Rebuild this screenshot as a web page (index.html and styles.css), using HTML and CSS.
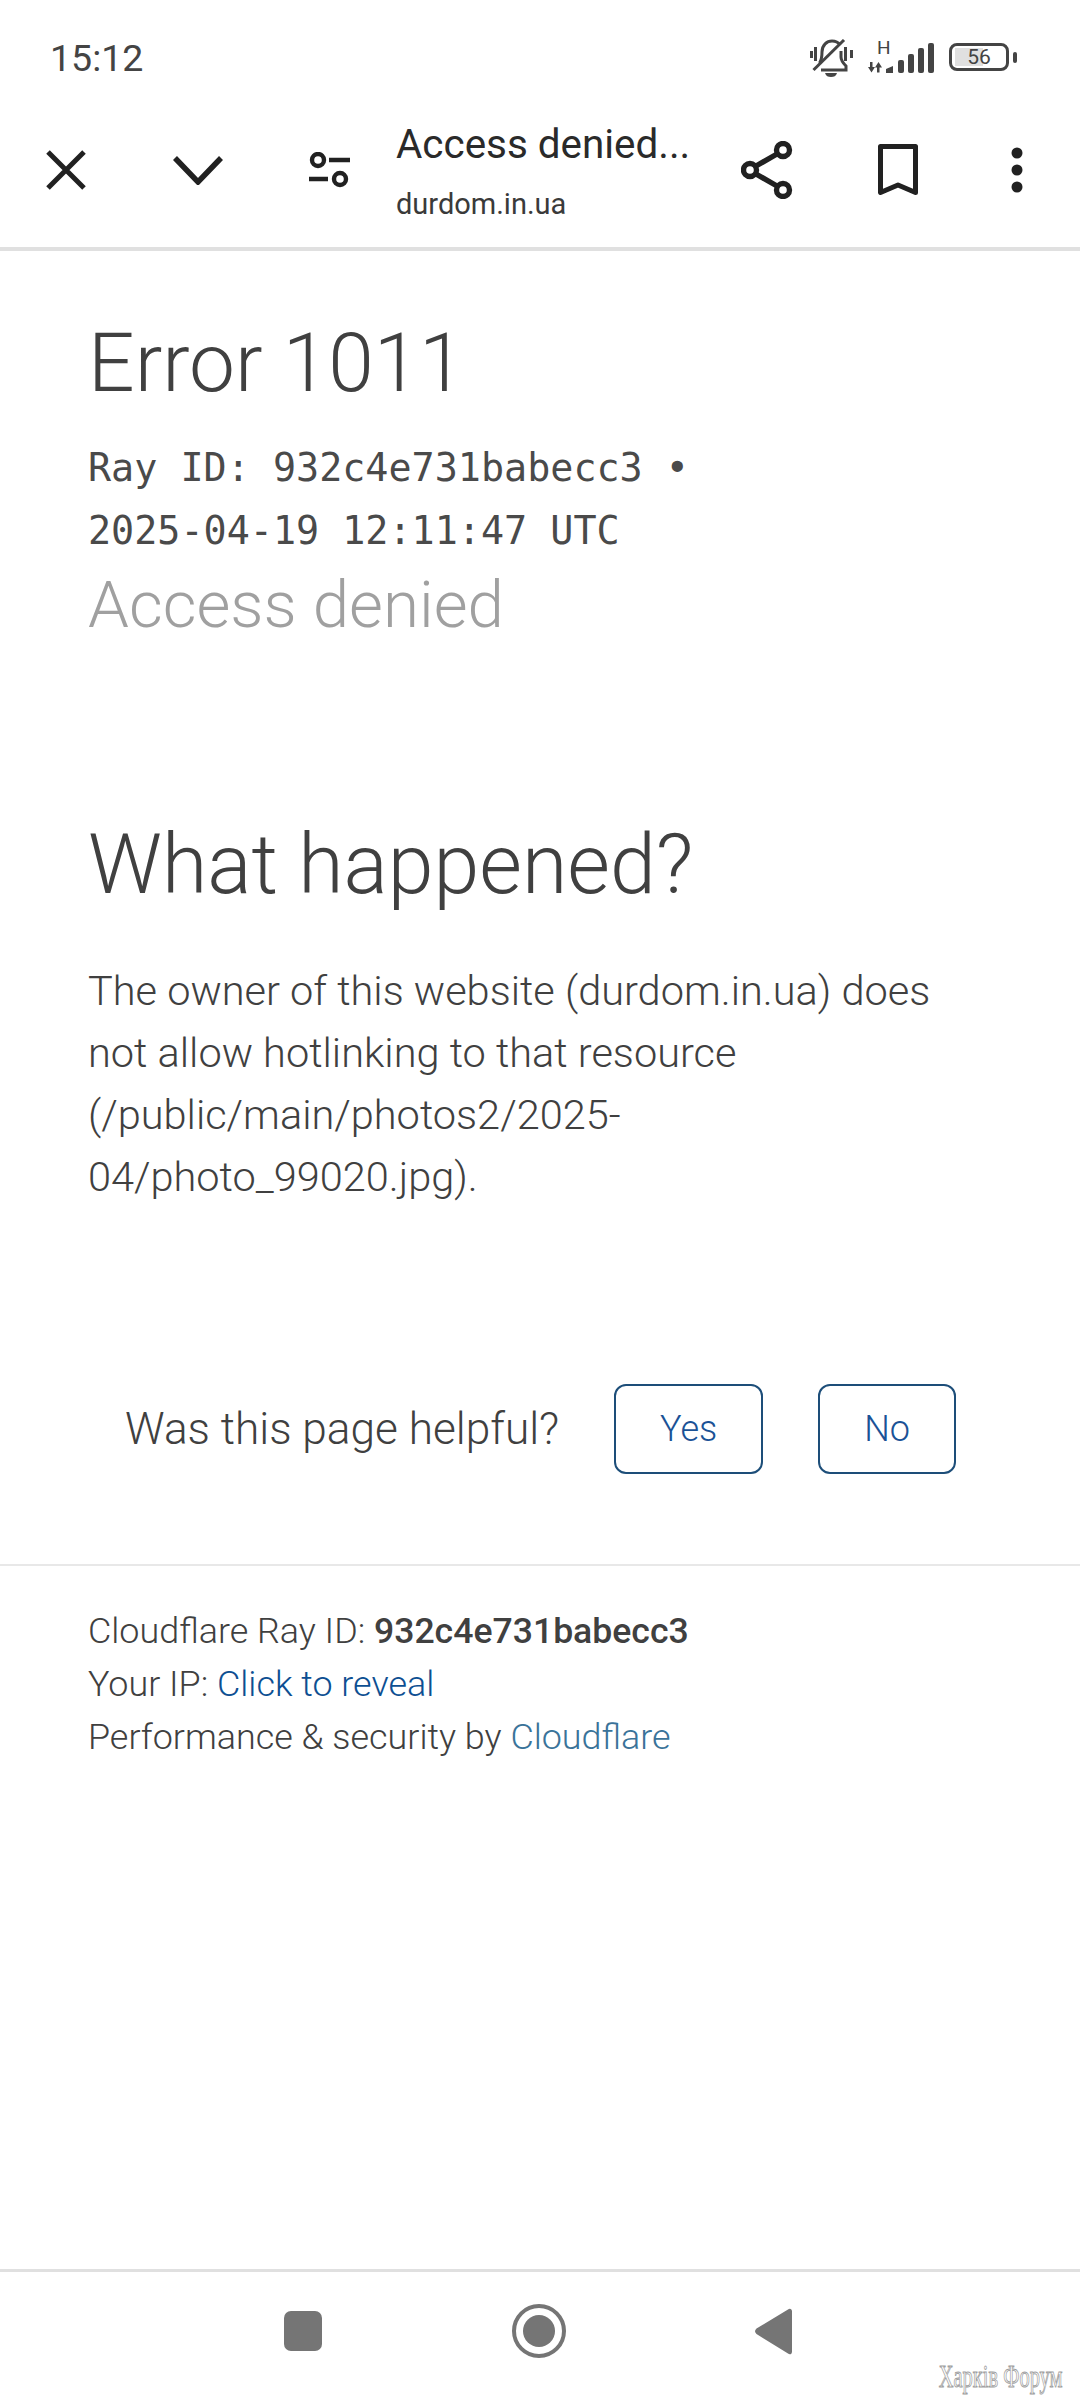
FILE: index.html
```html
<!doctype html>
<html lang="en">

<head>
  <meta charset="utf-8" />
  <title>Access denied</title>
  <link rel="stylesheet" href="styles.css">
</head>

<body>
  <div class="phone">
    <div class="status-bar">
      <span class="time">15:12</span>
      <div class="status-icons">
        <svg class="ic-bell" viewBox="0 0 44 38" width="44" height="38" fill="none" stroke="#444" stroke-width="3">
          <path d="M2.500 12v7M6.500 8v14M36.500 8v14M42.500 11v8" />
          <path d="M10.500 24c2-3 2.500-7 2.500-11 0-7 5-11 10-11 3 0 6 1 8 4M32 12v6c0 4 2 6 5 9v4H12" />
          <path d="M4.500 31 35 1" />
          <path d="M16 34h12c-1 3-3 4-6 4s-5-1-6-4z" fill="#444" stroke="none" />
        </svg>
        <div class="signal">
          <span class="net">H</span>
          <svg viewBox="0 0 66 32" width="66" height="32" fill="#444">
            <path d="M2 21h2.500v5H7l-3.500 5.500L0 26h2zM9 31.500h2.500v-5H14L10.500 21 7 26.500h2z" />
            <path d="M18 28l7-3v7h-7z" />
            <rect x="30" y="19" width="6" height="13" rx="2" />
            <rect x="40" y="13" width="6" height="19" rx="2" />
            <rect x="50" y="7" width="6" height="25" rx="2" />
            <rect x="60" y="2" width="6" height="30" rx="2" />
          </svg>
        </div>
        <div class="battery">
          <div class="battery-body"><span class="battery-fill"></span><span class="battery-num">56</span></div>
          <span class="battery-tip"></span>
        </div>
      </div>
    </div>

    <div class="toolbar">
      <svg class="ic-close" viewBox="0 0 40 40" width="40" height="40" fill="none" stroke="#212121" stroke-width="5">
        <path d="M2 2l36 36M38 2 2 38" />
      </svg>
      <svg class="ic-chevron" viewBox="0 0 50 30" width="50" height="30" fill="none" stroke="#212121" stroke-width="5.500">
        <path d="M2 3l23 24L48 3" />
      </svg>
      <svg class="ic-tune" viewBox="0 0 42 36" width="42" height="36" fill="none" stroke="#212121" stroke-width="4.400">
        <circle cx="10" cy="8" r="6" />
        <circle cx="32" cy="27" r="6" />
        <path d="M21 8h21M1 27h19" />
      </svg>
      <div class="tab-title">
        <span class="tab-name">Access denied...</span>
        <span class="tab-url">durdom.in.ua</span>
      </div>
      <svg class="ic-share" viewBox="0 0 52 58" width="52" height="58" fill="none" stroke="#212121" stroke-width="5.400">
        <circle cx="9" cy="29" r="6.500" />
        <circle cx="42" cy="9" r="6.500" />
        <circle cx="42" cy="49" r="6.500" />
        <path d="M15 25l21-12M15 33l21 12" />
      </svg>
      <svg class="ic-mark" viewBox="0 0 40 52" width="40" height="52" fill="none" stroke="#212121" stroke-width="5">
        <path d="M2.500 2.500h35v46L20 41 2.500 48.500z" stroke-linejoin="round" />
      </svg>
      <svg class="ic-more" viewBox="0 0 12 46" width="12" height="46" fill="#212121">
        <circle cx="6" cy="6" r="5.500" />
        <circle cx="6" cy="23" r="5.500" />
        <circle cx="6" cy="40" r="5.500" />
      </svg>
    </div>

    <div class="page">
      <div class="error-head">
        <h1>Error 1011</h1>
        <div class="ray-line">Ray ID: 932c4e731babecc3 •<br>2025-04-19 12:11:47 UTC</div>
        <h2>Access denied</h2>
      </div>

      <div class="what">
        <h3>What happened?</h3>
        <p>The owner of this website (durdom.in.ua) does not allow hotlinking to that resource (/public/main/photos2/2025-04/photo_99020.jpg).</p>
      </div>

      <div class="feedback">
        <span>Was this page helpful?</span>
        <a class="fb-btn fb-yes">Yes</a>
        <a class="fb-btn fb-no">No</a>
      </div>

      <div class="footer">
        <div>Cloudflare Ray ID: <strong>932c4e731babecc3</strong></div>
        <div>Your IP: <a class="link-ip">Click to reveal</a></div>
        <div>Performance &amp; security by <a class="link-cf">Cloudflare</a></div>
      </div>
    </div>

    <div class="nav-bar">
      <span class="nav-square"></span>
      <span class="nav-home"><span></span></span>
      <svg class="nav-back" viewBox="0 0 37 47" width="37" height="47" fill="#757575">
        <path d="M33 1.500c1.500-1.500 4-1 4 2v40c0 3-2.500 3.500-4 2L1.500 26c-2-2-2-3.500 0-5.500z" />
      </svg>
    </div>

    <div class="watermark">Харків Форум</div>
  </div>
</body>

</html>
```

FILE: styles.css
```css
body {
  margin: 0;
  background: #fff;
  font-family: Roboto, sans-serif;
}

.phone {
  width: 1080px;
  height: 2400px;
  display: flex;
  flex-direction: column;
  position: relative;
  overflow: hidden;
}

.status-bar {
  height: 92px;
  flex: none;
  display: flex;
  align-items: flex-start;
  justify-content: space-between;
  padding: 39px 63px 0 50px;
  box-sizing: border-box;
}

.time {
  font-size: 37.500px;
  line-height: 38px;
  color: #444;
}

.status-icons {
  display: flex;
  align-items: flex-start;
}

.signal {
  position: relative;
  margin: 2px 0 0 15px;
  width: 66px;
  height: 32px;
}

.net {
  position: absolute;
  left: 9px;
  top: -3px;
  font-size: 19px;
  line-height: 19px;
  color: #444;
}

.battery {
  display: flex;
  align-items: center;
  margin: 4px 0 0 15px;
}

.battery-body {
  width: 54px;
  height: 22px;
  border: 3px solid #444;
  border-radius: 8px;
  position: relative;
  display: flex;
  align-items: center;
  justify-content: center;
}

.battery-fill {
  position: absolute;
  left: 3px;
  top: 2px;
  bottom: 2px;
  width: 28px;
  background: #e0e0e0;
}

.battery-num {
  position: relative;
  font-size: 21px;
  color: #444;
}

.battery-tip {
  width: 4px;
  height: 11px;
  margin-left: 4px;
  background: #444;
  border-radius: 2px;
}

.toolbar {
  height: 155px;
  flex: none;
  display: flex;
  align-items: center;
  border-bottom: 4px solid #e0e0e0;
}

.toolbar svg {
  flex: none;
}

.ic-close {
  margin-left: 46px;
}

.ic-chevron {
  margin-left: 87px;
}

.ic-tune {
  margin-left: 85px;
}

.tab-title {
  width: 300px;
  margin-left: 46px;
  padding-top: 5px;
  display: flex;
  flex-direction: column;
}

.tab-name {
  font-size: 40.400px;
  line-height: 54px;
  color: #2a2a2a;
  white-space: nowrap;
}

.tab-url {
  font-size: 29px;
  line-height: 44px;
  margin-top: 10px;
  color: #3a3a3a;
}

.ic-share {
  margin-left: 45px;
}

.ic-mark {
  margin-left: 85px;
}

.ic-more {
  margin-left: 93px;
}

.page {
  flex: 1;
  color: #404040;
  font-weight: 300;
  min-height: 0;
}

.error-head {
  padding: 67px 88px 0;
}

h1 {
  font-size: 82px;
  line-height: 90px;
  font-weight: 300;
  margin: 0;
}

.ray-line {
  font-family: "DejaVu Sans Mono", monospace;
  font-weight: 400;
  font-size: 38.400px;
  line-height: 63px;
  margin-top: 28px;
  color: #4a4a4a;
}

h2 {
  font-size: 65.500px;
  line-height: 80px;
  font-weight: 300;
  margin: 3px 0 0;
  color: #a0a0a0;
}

.what {
  padding: 0 88px;
  margin-top: 172px;
}

h3 {
  font-size: 82.500px;
  line-height: 96px;
  font-weight: 300;
  margin: 0;
}

p {
  font-size: 41.500px;
  line-height: 62px;
  margin: 47px 0 0;
}

.feedback {
  display: flex;
  align-items: center;
  font-size: 44.200px;
  margin-top: 176px;
  padding-left: 125px;
}

.fb-btn {
  display: flex;
  align-items: center;
  justify-content: center;
  height: 86px;
  border: 2px solid #1d4e79;
  border-radius: 12px;
  color: #1a5296;
  font-size: 36px;
}

.fb-yes {
  width: 145px;
  margin-left: 55px;
}

.fb-no {
  width: 134px;
  margin-left: 55px;
}

.footer {
  margin-top: 90px;
  border-top: 2px solid #e8e8e8;
  padding: 39px 88px 0;
  font-size: 35.900px;
  line-height: 53px;
}

.footer strong {
  font-weight: 500;
  font-size: 35.600px;
}

.link-ip {
  color: #0d4f92;
}

.link-cf {
  color: #3a7399;
}

.nav-bar {
  height: 131px;
  flex: none;
  border-top: 3px solid #e0e0e0;
  display: flex;
  align-items: center;
  padding: 0 0 10px 284px;
  box-sizing: border-box;
}

.nav-square {
  width: 38px;
  height: 40px;
  border-radius: 7px;
  background: #757575;
}

.nav-home {
  width: 54px;
  height: 54px;
  margin-left: 190px;
  border: 4px solid #757575;
  border-radius: 50%;
  box-sizing: border-box;
  display: flex;
  align-items: center;
  justify-content: center;
}

.nav-home span {
  width: 32px;
  height: 32px;
  border-radius: 50%;
  background: #757575;
}

.nav-back {
  margin-left: 189px;
}

.watermark {
  position: absolute;
  right: 17px;
  bottom: 6px;
  font-family: "Liberation Serif", serif;
  font-size: 32px;
  line-height: 36px;
  color: #fff;
  -webkit-text-stroke: 1px #a0a0a0;
  white-space: nowrap;
  transform: scaleX(0.64);
  transform-origin: right center;
}
```
